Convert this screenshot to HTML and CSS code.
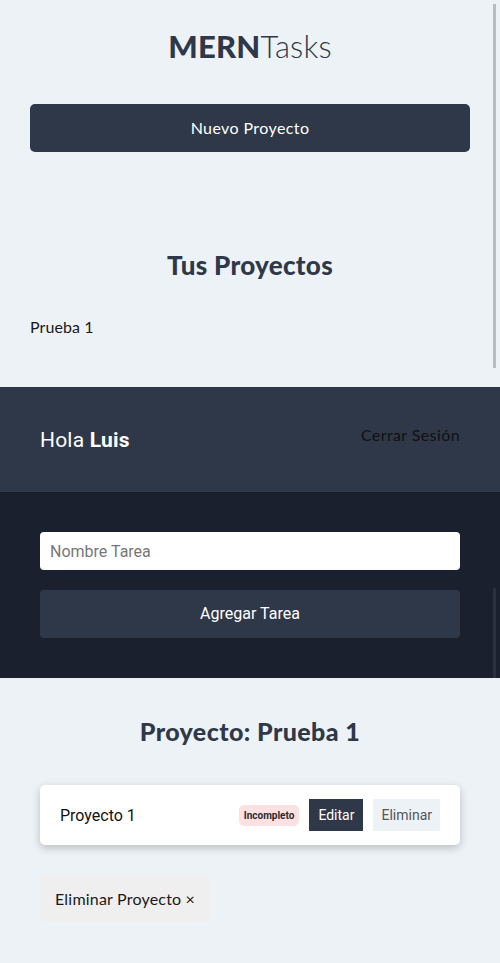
FILE: index.html
```html
<!DOCTYPE html>
<html lang="es">
<head>
<meta charset="utf-8">
<title>MERNTasks</title>
<link rel="stylesheet" href="styles.css">
</head>
<body>
<div class="app">
  <aside class="sidebar">
    <h1 class="logo"><b>MERN</b><span>Tasks</span></h1>
    <div class="new-project">
      <button class="btn-primary">Nuevo Proyecto</button>
    </div>
    <div class="projects">
      <h2>Tus Proyectos</h2>
      <ul class="project-list">
        <li>Prueba 1</li>
      </ul>
    </div>
    <div class="scrollbar"></div>
  </aside>
  <header class="topbar">
    <p class="greeting">Hola <b>Luis</b></p>
    <a class="logout">Cerrar Sesión</a>
  </header>
  <section class="task-form">
    <input class="input" type="text" placeholder="Nombre Tarea">
    <button class="btn-add">Agregar Tarea</button>
    <div class="scrollbar dark"></div>
  </section>
  <main class="tasks">
    <h2>Proyecto: Prueba 1</h2>
    <ul class="task-list">
      <li class="task">
        <span class="task-name">Proyecto 1</span>
        <div class="task-actions">
          <span class="badge">Incompleto</span>
          <button class="btn-edit">Editar</button>
          <button class="btn-delete">Eliminar</button>
        </div>
      </li>
    </ul>
    <button class="btn-remove">Eliminar Proyecto &times;</button>
  </main>
</div>
</body>
</html>
```

FILE: styles.css
```css
* { box-sizing: border-box; }
html, body { margin: 0; padding: 0; }
body {
  background: #edf2f7;
  font-family: Lato, "Open Sans", sans-serif;
  color: #2f3848;
}
.app { display: flex; flex-direction: column; }

.sidebar {
  position: relative;
  height: 387px;
  padding: 23px 30px 0;
  background: #edf2f7;
}
.logo {
  margin: 0;
  text-align: center;
  font-size: 31px;
  line-height: 46px;
  letter-spacing: 0.2px;
  font-weight: 300;
  color: #2f3848;
}
.logo b { font-weight: 900; }
.new-project { margin-top: 35px; }
.btn-primary {
  display: block;
  width: 100%;
  height: 48px;
  border: none;
  border-radius: 5px;
  background: #2f3848;
  color: #fff;
  font-family: Lato, sans-serif;
  font-size: 16px;
  letter-spacing: 0.4px;
  font-weight: 400;
  padding: 0 0 2px;
}
.projects { margin-top: 95px; }
.projects h2 {
  margin: 0;
  text-align: center;
  font-size: 26px;
  line-height: 36px;
  letter-spacing: 0.3px;
  font-weight: 900;
}
.project-list {
  list-style: none;
  margin: 34px 0 0;
  padding: 0;
  font-size: 16px;
  line-height: 20px;
  letter-spacing: 0.1px;
  color: #1a1a1a;
}
.scrollbar {
  position: absolute;
  right: 4px;
  top: 4px;
  width: 3px;
  height: 364px;
  background: #b9bcc0;
}
.scrollbar.dark {
  top: 96px;
  height: 90px;
  background: #2b3040;
}

.topbar {
  height: 105px;
  background: #2f3848;
  padding: 0 40px;
  display: flex;
  align-items: center;
  justify-content: space-between;
}
.greeting {
  margin: 0;
  font-family: Roboto, sans-serif;
  font-size: 21px;
  letter-spacing: 0.2px;
  color: #fff;
}
.greeting b { font-weight: 700; }
.logout {
  margin-top: -10px;
  font-size: 16px;
  letter-spacing: 0.4px;
  color: #111;
}

.task-form {
  position: relative;
  height: 186px;
  background: #1a202d;
  padding: 40px 40px 0;
  display: flex;
  flex-direction: column;
  gap: 20px;
}
.input {
  height: 38px;
  border: none;
  border-radius: 4px;
  background: #fff;
  padding: 0 10px;
  font-family: Roboto, sans-serif;
  font-size: 16px;
}
.input::placeholder { color: #777; }
.btn-add {
  height: 48px;
  border: none;
  border-radius: 4px;
  background: #2f3848;
  color: #fff;
  font-family: Roboto, sans-serif;
  font-size: 16px;
  padding: 0 0 2px;
}

.tasks { padding: 39px 40px 0; }
.tasks h2 {
  margin: 0;
  text-align: center;
  font-size: 25px;
  line-height: 28px;
  letter-spacing: 0.4px;
  font-weight: 900;
}
.task-list { list-style: none; margin: 40px 0 0; padding: 0; }
.task {
  height: 60px;
  background: #fff;
  border-radius: 5px;
  box-shadow: 0 3px 8px rgba(0,0,0,0.22);
  padding: 0 20px;
  display: flex;
  align-items: center;
  justify-content: space-between;
}
.task-name {
  font-family: Roboto, sans-serif;
  font-size: 16px;
  color: #111;
}
.task-actions { display: flex; align-items: center; gap: 10px; }
.badge {
  height: 21px;
  line-height: 21px;
  padding: 0 5px;
  border-radius: 5px;
  background: #fde0e1;
  font-family: Roboto, sans-serif;
  font-size: 10px;
  font-weight: 700;
  color: #2a2a2a;
}
.btn-edit, .btn-delete {
  height: 32px;
  border: none;
  padding: 0 8px;
  font-family: Roboto, sans-serif;
  font-size: 14px;
}
.btn-edit { background: #2f3848; color: #fff; padding: 0 9px; }
.btn-delete { background: #edf2f7; color: #555; }
.btn-remove {
  margin-top: 30px;
  height: 47px;
  border: none;
  border-radius: 5px;
  padding: 0 15px;
  background: #efefef;
  color: #1a1a1a;
  font-family: Lato, sans-serif;
  font-size: 16px;
  letter-spacing: 0.2px;
}
```
